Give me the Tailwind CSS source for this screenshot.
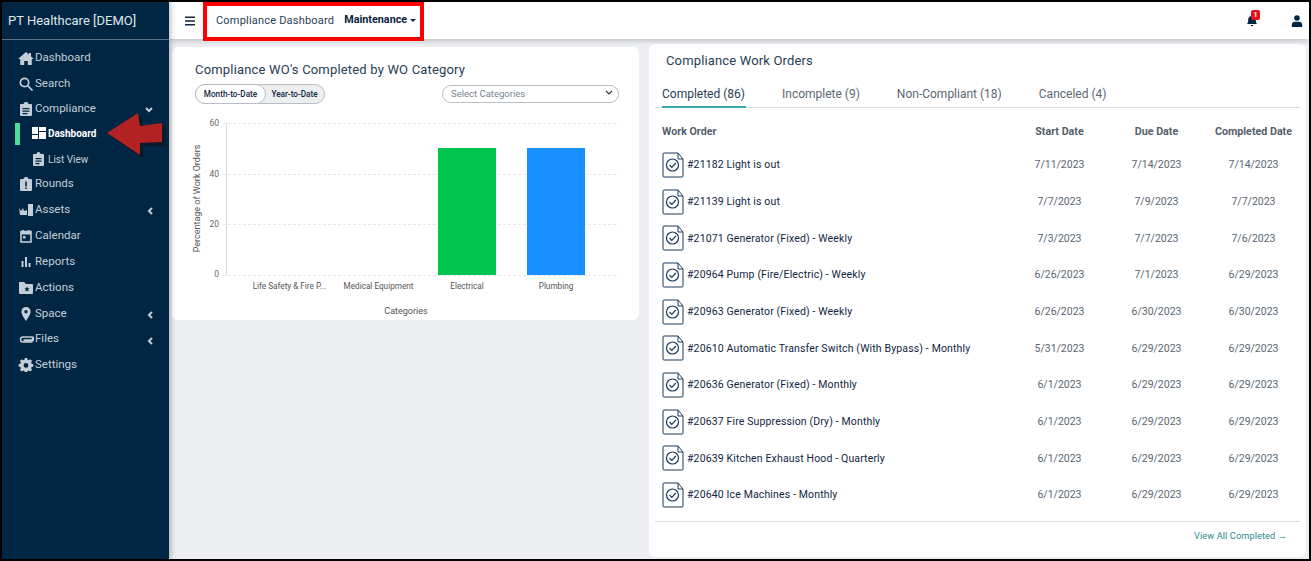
<!DOCTYPE html>
<html>
<head>
<meta charset="utf-8">
<script src="https://cdn.jsdelivr.net/npm/@tailwindcss/browser@4"></script>
</head>
<body class="m-0">
<div class="relative w-[1311px] h-[561px] overflow-hidden border-2 border-black bg-[#eceef2] flex font-['Roboto',sans-serif] text-[#12263f]">
  <!-- Sidebar -->
  <aside class="w-[167px] shrink-0 bg-[#012643] text-[#c4ced8] text-[11.500px] flex flex-col z-10 shadow-[2px_0_5px_rgba(0,0,0,0.25)]">
    <div class="h-[38px] shrink-0 border-b border-[#5b7285] pl-[6px] flex items-center text-[13px] text-[#dfe6ec]">PT Healthcare [DEMO]</div>
    <nav class="pt-[5px] flex flex-col">
      <a class="h-[25.8px] flex items-center pl-[16px] gap-[1px]"><svg class="w-[16px] h-[14px]" viewBox="0 0 16 14" fill="#c4ced8"><path d="M8 1 0 8h2.2v6h4v-4h3.6v4h4V8H16l-3-2.6V2h-2v1.6z"/></svg>Dashboard</a>
      <a class="h-[25.8px] flex items-center pl-[16px] gap-[1px]"><svg class="w-[16px] h-[14px]" viewBox="0 0 16 14" fill="none" stroke="#c4ced8" stroke-width="1.7"><circle cx="6.5" cy="5.5" r="4.2"/><path d="m9.5 8.500 5 5"/></svg>Search</a>
      <a class="h-[24px] flex items-center pl-[16px] gap-[1px] relative"><svg class="w-[16px] h-[14px]" viewBox="0 0 16 14" fill="#c4ced8"><path d="M3 2h2.500a2.500 2 0 0 1 5 0H13a1 1 0 0 1 1 1v10a1 1 0 0 1-1 1H3a1 1 0 0 1-1-1V3a1 1 0 0 1 1-1z"/><path d="M4.500 6h7v1.300h-7zM4.500 8.500h7v1.300h-7zM4.500 11h5v1.300h-5z" fill="#012643"/></svg>Compliance<svg class="absolute left-[143px] top-[10px] w-[8px] h-[6px]" viewBox="0 0 8 6" fill="none" stroke="#c4ced8" stroke-width="2"><path d="m1 1 3 3 3-3"/></svg></a>
      <a class="h-[25px] flex items-center pl-[30px] gap-[2px] relative text-[10px] font-bold text-white"><span class="absolute left-[13px] top-[2px] w-[5px] h-[22px] bg-[#4ade9a]"></span><svg class="w-[14px] h-[12px]" viewBox="0 0 14 12" fill="#fff"><path d="M0 0h6v7H0zM7 0h7v4H7zM7 5h7v7H7zM0 8h6v4H0z"/></svg>Dashboard</a>
      <a class="h-[26px] pt-[1px] flex items-center pl-[30px] gap-[3px] text-[10px]"><svg class="w-[13px] h-[14px]" viewBox="0 0 13 14" fill="#c4ced8"><path d="M2 2h2.500a2 2 0 0 1 4 0H11a1 1 0 0 1 1 1v10a1 1 0 0 1-1 1H2a1 1 0 0 1-1-1V3a1 1 0 0 1 1-1z"/><path d="M3.500 6h6v1.200h-6zM3.500 8.500h6v1.200h-6zM3.500 11h4v1.200h-4z" fill="#012643"/></svg>List View</a>
      <a class="h-[25px] flex items-center pl-[16px] gap-[1px]"><svg class="w-[16px] h-[14px]" viewBox="0 0 16 14" fill="#c4ced8"><path d="M3 2h2.500a2.500 2 0 0 1 5 0H13a1 1 0 0 1 1 1v10a1 1 0 0 1-1 1H3a1 1 0 0 1-1-1V3a1 1 0 0 1 1-1z"/><path d="M7.200 4.500h1.600v5H7.200zM7.200 10.500h1.600v1.600H7.200z" fill="#012643"/></svg>Rounds</a>
      <a class="h-[26px] flex items-center pl-[16px] gap-[1px] relative"><svg class="w-[16px] h-[14px]" viewBox="0 0 16 14" fill="#c4ced8"><path d="M10 1h5v12h-5zM1 5l2 3 2-3 1 3 3-1v5H2z"/></svg>Assets<svg class="absolute left-[145px] top-[10px] w-[6px] h-[8px]" viewBox="0 0 6 8" fill="none" stroke="#c4ced8" stroke-width="2"><path d="M5 1 2 4l3 3"/></svg></a>
      <a class="h-[26px] flex items-center pl-[16px] gap-[1px]"><svg class="w-[16px] h-[14px]" viewBox="0 0 16 14" fill="none" stroke="#c4ced8" stroke-width="1.600"><rect x="3" y="2.500" width="10" height="10.500"/><path d="M3 4h10" stroke-width="3"/><path d="M5 1v2M11 1v2"/><rect x="5" y="7" width="2.500" height="2.500" fill="#c4ced8" stroke="none"/></svg>Calendar</a>
      <a class="h-[26px] flex items-center pl-[16px] gap-[1px]"><svg class="w-[16px] h-[14px]" viewBox="0 0 16 14" fill="#c4ced8"><path d="M3.500 6H5.500V12H3.500zM7 2H9V12H7zM10.500 8H12.500V12H10.500z"/></svg>Reports</a>
      <a class="h-[26px] flex items-center pl-[16px] gap-[1px]"><svg class="w-[16px] h-[14px]" viewBox="0 0 16 14" fill="#c4ced8"><path d="M1 1h5l2 2h6a1 1 0 0 1 1 1v8a1 1 0 0 1-1 1H2a1 1 0 0 1-1-1z"/><path d="m9 5.500.8 1.700 1.800.2-1.300 1.200.4 1.800L9 9.500l-1.700.9.400-1.800-1.300-1.200 1.800-.2z" fill="#012643"/></svg>Actions</a>
      <a class="h-[26px] flex items-center pl-[16px] gap-[1px] relative"><svg class="w-[16px] h-[14px]" viewBox="0 0 16 14" fill="#c4ced8"><path fill-rule="evenodd" d="M8 0a4.600 4.600 0 0 1 4.600 4.600C12.600 8 8 14 8 14S3.400 8 3.400 4.600A4.600 4.600 0 0 1 8 0zm0 3a1.700 1.700 0 1 0 0 3.400A1.700 1.700 0 0 0 8 3z"/></svg>Space<svg class="absolute left-[145px] top-[10px] w-[6px] h-[8px]" viewBox="0 0 6 8" fill="none" stroke="#c4ced8" stroke-width="2"><path d="M5 1 2 4l3 3"/></svg></a>
      <a class="h-[25px] flex items-center pl-[16px] gap-[1px] relative"><svg class="w-[16px] h-[14px]" viewBox="0 0 16 14" fill="none" stroke="#c4ced8" stroke-width="1.500"><path d="M14 5H5a2.200 2.200 0 0 0 0 5h9.500"/><path d="M14 5a2 2 0 0 1 0 3.500H5.500" stroke-width="2.500"/></svg>Files<svg class="absolute left-[145px] top-[10px] w-[6px] h-[8px]" viewBox="0 0 6 8" fill="none" stroke="#c4ced8" stroke-width="2"><path d="M5 1 2 4l3 3"/></svg></a>
      <a class="h-[26px] flex items-center pl-[16px] gap-[1px]"><svg class="w-[16px] h-[14px]" viewBox="0 0 16 14" fill="#c4ced8"><path fill-rule="evenodd" d="M6.800 0h2.400l.4 1.800 1.200.5 1.600-1 1.700 1.700-1 1.600.5 1.200 1.800.4v2.400l-1.800.4-.5 1.200 1 1.600-1.700 1.700-1.600-1-1.200.5-.4 1.800H6.800l-.4-1.800-1.200-.5-1.600 1-1.700-1.700 1-1.600-.5-1.200L.6 8.600V6.200l1.800-.4.5-1.200-1-1.600 1.700-1.700 1.600 1 1.200-.5zM8 5a2.400 2.400 0 1 0 0 4.800A2.400 2.400 0 0 0 8 5z"/></svg>Settings</a>
    </nav>
  </aside>

  <!-- Main -->
  <div class="flex-1 flex flex-col min-w-0">
    <header class="h-[37px] shrink-0 bg-white shadow-[0_2px_5px_rgba(0,0,0,0.18)] flex items-center relative z-[5]">
      <svg class="ml-[15px] w-[12px] h-[10px]" viewBox="0 0 12 10" fill="#12263f"><path d="M1 .5h10V2H1zM1 4.300h10v1.400H1zM1 8h10v1.500H1z"/></svg>
      <div class="ml-[7px] h-[39px] self-start border-[4px] border-[#f00] flex items-center pl-[9px] w-[221px] whitespace-nowrap text-[11px]">
        <span class="tracking-[0.2px] text-[#283e55]">Compliance Dashboard</span>
        <span class="ml-[10px] font-bold text-[#0c2340] text-[10.800px] -mt-[2px]">Maintenance</span>
        <span class="ml-[3px] border-x-[3px] border-x-transparent border-t-[3px] border-t-[#12263f] -mt-[2px]"></span>
      </div>
      <div class="ml-auto relative mr-[34px] w-[10px] h-[12px]">
        <svg class="absolute left-0 top-0 w-[10px] h-[12px]" viewBox="0 0 10 12" fill="#012643"><path d="M5 0a1 1 0 0 1 1 1c2 .5 2.800 2 2.800 4 0 2 .5 3 1.200 4H0c.7-1 1.200-2 1.200-4 0-2 .8-3.500 2.800-4a1 1 0 0 1 1-1zM3.800 10h2.400a1.200 1.200 0 0 1-2.400 0z"/></svg>
        <span class="absolute left-[4px] -top-[5px] w-[9px] h-[10px] rounded-[2px] bg-[#e8101c] text-white text-[7px] font-bold leading-[10px] text-center">1</span>
      </div>
      <svg class="mr-[6px] w-[12px] h-[12px]" viewBox="0 0 12 12" fill="#012643"><circle cx="6" cy="3" r="2.800"/><path d="M.8 12V10a3.500 3.500 0 0 1 3.500-3.300h3.400A3.500 3.500 0 0 1 11.200 10v2z"/></svg>
    </header>

    <div class="flex-1 flex items-start pl-[3px] gap-[10px] min-h-0">
      <!-- Left card -->
      <section class="mt-[8px] w-[467px] h-[273px] bg-white rounded-[6px] shrink-0 px-[23px] pt-[15px]">
        <h2 class="text-[13px] font-normal leading-[16px] tracking-[0.18px] text-[#283e55]">Compliance WO's Completed by WO Category</h2>
        <div class="mt-[6px] flex items-center justify-between">
          <div class="flex h-[20px] w-[130px] rounded-full border border-[#b9bec5] bg-[#eceef0] text-[8.200px] font-medium text-[#12263f] whitespace-nowrap">
            <span class="w-[71px] -m-[1px] rounded-full border border-[#b9bec5] bg-white flex items-center justify-center">Month-to-Date</span>
            <span class="flex-1 flex items-center justify-center">Year-to-Date</span>
          </div>
          <div class="relative h-[18px] w-[177px] rounded-full border border-[#b9bec5] bg-white text-[9.500px] text-[#7a8490] pl-[8px] flex items-center mr-[-3px]">Select Categories
            <svg class="absolute right-[5px] top-[4px] w-[8px] h-[6px]" viewBox="0 0 8 6" fill="none" stroke="#333" stroke-width="1.100"><path d="m1 1 3 3 3-3"/></svg>
          </div>
        </div>
        <svg class="block -ml-[23px] mt-[14px]" width="467" height="200" viewBox="172 118 467 200" font-family="Roboto, sans-serif">
          <g stroke="#e6e8ea" stroke-dasharray="3 2"><path d="M223 123.500h396M223 174.500h396M223 224.500h396M223 275.500h396"/></g>
          <path d="M226.500 123v152" stroke="#dcdfe2"/>
          <rect x="438" y="148" width="58" height="127" fill="#00c64f"/>
          <rect x="527" y="148" width="58" height="127" fill="#1890ff"/>
          <g fill="#666" font-size="8.500" text-anchor="end"><text x="219" y="126">60</text><text x="219" y="177">40</text><text x="219" y="227">20</text><text x="219" y="277">0</text></g>
          <g fill="#555" font-size="8.200" text-anchor="middle"><text x="289.500" y="289">Life Safety &amp; Fire P...</text><text x="378.500" y="289">Medical Equipment</text><text x="467" y="289">Electrical</text><text x="556" y="289">Plumbing</text></g>
          <text x="406" y="314" fill="#555" font-size="9" text-anchor="middle">Categories</text>
          <text transform="translate(200 198.500) rotate(-90)" fill="#555" font-size="9" text-anchor="middle">Percentage of Work Orders</text>
        </svg>
      </section>

      <!-- Right card -->
      <section class="mt-[5px] w-[657px] h-[513px] bg-white rounded-[6px] shrink-0 px-[6px] flex flex-col">
        <h2 class="mt-[9px] ml-[11px] text-[13px] font-normal leading-[16px] tracking-[0.15px] text-[#283e55]">Compliance Work Orders</h2>
        <div class="mt-[12px] h-[27px] flex border-b border-[#d9dde1] text-[12px] text-[#5b6671] pl-[7px] whitespace-nowrap">
          <span class="h-[27px] w-[84px] border-b-[2px] border-[#3aa9ad] text-[#283e55] pt-[4px]">Completed (86)</span>
          <span class="ml-[36px] pt-[4px]">Incomplete (9)</span>
          <span class="ml-[37px] pt-[4px]">Non-Compliant (18)</span>
          <span class="ml-[37px] pt-[4px]">Canceled (4)</span>
        </div>
        <div class="mt-[15px] ml-[7px] grid grid-cols-[349px_97px_97px_97px] text-[10.700px] font-bold text-[#55606b] h-[18px] items-center">
          <span>Work Order</span><span class="text-center">Start Date</span><span class="text-center">Due Date</span><span class="text-center">Completed Date</span>
        </div>
        <div class="ml-[7px] mt-[5.800px] flex flex-col text-[10.500px]">
          <div class="grid grid-cols-[349px_97px_97px_97px] h-[36.660px] items-center"><span class="flex items-center gap-[3px] text-[#12263f] tracking-[0.14px]"><svg class="w-[22px] h-[26px] shrink-0" viewBox="0 0 22 26" fill="none" stroke="#1d3a57" stroke-width="1"><path d="M1 2a1 1 0 0 1 1-1h14l5 6v17a1 1 0 0 1-1 1H2a1 1 0 0 1-1-1zM16 1v6h5"/><circle cx="10.500" cy="13" r="6" stroke-width="1.200"/><path d="m7.500 13 2.300 2.300 4-4.300" stroke-width="1.200"/></svg>#21182 Light is out</span><span class="text-center text-[#5b6671]">7/11/2023</span><span class="text-center text-[#5b6671]">7/14/2023</span><span class="text-center text-[#5b6671]">7/14/2023</span></div>
          <div class="grid grid-cols-[349px_97px_97px_97px] h-[36.660px] items-center"><span class="flex items-center gap-[3px] text-[#12263f] tracking-[0.14px]"><svg class="w-[22px] h-[26px] shrink-0" viewBox="0 0 22 26" fill="none" stroke="#1d3a57" stroke-width="1"><path d="M1 2a1 1 0 0 1 1-1h14l5 6v17a1 1 0 0 1-1 1H2a1 1 0 0 1-1-1zM16 1v6h5"/><circle cx="10.500" cy="13" r="6" stroke-width="1.200"/><path d="m7.500 13 2.300 2.300 4-4.300" stroke-width="1.200"/></svg>#21139 Light is out</span><span class="text-center text-[#5b6671]">7/7/2023</span><span class="text-center text-[#5b6671]">7/9/2023</span><span class="text-center text-[#5b6671]">7/7/2023</span></div>
          <div class="grid grid-cols-[349px_97px_97px_97px] h-[36.660px] items-center"><span class="flex items-center gap-[3px] text-[#12263f] tracking-[0.14px]"><svg class="w-[22px] h-[26px] shrink-0" viewBox="0 0 22 26" fill="none" stroke="#1d3a57" stroke-width="1"><path d="M1 2a1 1 0 0 1 1-1h14l5 6v17a1 1 0 0 1-1 1H2a1 1 0 0 1-1-1zM16 1v6h5"/><circle cx="10.500" cy="13" r="6" stroke-width="1.200"/><path d="m7.500 13 2.300 2.300 4-4.300" stroke-width="1.200"/></svg>#21071 Generator (Fixed) - Weekly</span><span class="text-center text-[#5b6671]">7/3/2023</span><span class="text-center text-[#5b6671]">7/7/2023</span><span class="text-center text-[#5b6671]">7/6/2023</span></div>
          <div class="grid grid-cols-[349px_97px_97px_97px] h-[36.660px] items-center"><span class="flex items-center gap-[3px] text-[#12263f] tracking-[0.14px]"><svg class="w-[22px] h-[26px] shrink-0" viewBox="0 0 22 26" fill="none" stroke="#1d3a57" stroke-width="1"><path d="M1 2a1 1 0 0 1 1-1h14l5 6v17a1 1 0 0 1-1 1H2a1 1 0 0 1-1-1zM16 1v6h5"/><circle cx="10.500" cy="13" r="6" stroke-width="1.200"/><path d="m7.500 13 2.300 2.300 4-4.300" stroke-width="1.200"/></svg>#20964 Pump (Fire/Electric) - Weekly</span><span class="text-center text-[#5b6671]">6/26/2023</span><span class="text-center text-[#5b6671]">7/1/2023</span><span class="text-center text-[#5b6671]">6/29/2023</span></div>
          <div class="grid grid-cols-[349px_97px_97px_97px] h-[36.660px] items-center"><span class="flex items-center gap-[3px] text-[#12263f] tracking-[0.14px]"><svg class="w-[22px] h-[26px] shrink-0" viewBox="0 0 22 26" fill="none" stroke="#1d3a57" stroke-width="1"><path d="M1 2a1 1 0 0 1 1-1h14l5 6v17a1 1 0 0 1-1 1H2a1 1 0 0 1-1-1zM16 1v6h5"/><circle cx="10.500" cy="13" r="6" stroke-width="1.200"/><path d="m7.500 13 2.300 2.300 4-4.300" stroke-width="1.200"/></svg>#20963 Generator (Fixed) - Weekly</span><span class="text-center text-[#5b6671]">6/26/2023</span><span class="text-center text-[#5b6671]">6/30/2023</span><span class="text-center text-[#5b6671]">6/30/2023</span></div>
          <div class="grid grid-cols-[349px_97px_97px_97px] h-[36.660px] items-center"><span class="flex items-center gap-[3px] text-[#12263f] tracking-[0.14px]"><svg class="w-[22px] h-[26px] shrink-0" viewBox="0 0 22 26" fill="none" stroke="#1d3a57" stroke-width="1"><path d="M1 2a1 1 0 0 1 1-1h14l5 6v17a1 1 0 0 1-1 1H2a1 1 0 0 1-1-1zM16 1v6h5"/><circle cx="10.500" cy="13" r="6" stroke-width="1.200"/><path d="m7.500 13 2.300 2.300 4-4.300" stroke-width="1.200"/></svg>#20610 Automatic Transfer Switch (With Bypass) - Monthly</span><span class="text-center text-[#5b6671]">5/31/2023</span><span class="text-center text-[#5b6671]">6/29/2023</span><span class="text-center text-[#5b6671]">6/29/2023</span></div>
          <div class="grid grid-cols-[349px_97px_97px_97px] h-[36.660px] items-center"><span class="flex items-center gap-[3px] text-[#12263f] tracking-[0.14px]"><svg class="w-[22px] h-[26px] shrink-0" viewBox="0 0 22 26" fill="none" stroke="#1d3a57" stroke-width="1"><path d="M1 2a1 1 0 0 1 1-1h14l5 6v17a1 1 0 0 1-1 1H2a1 1 0 0 1-1-1zM16 1v6h5"/><circle cx="10.500" cy="13" r="6" stroke-width="1.200"/><path d="m7.500 13 2.300 2.300 4-4.300" stroke-width="1.200"/></svg>#20636 Generator (Fixed) - Monthly</span><span class="text-center text-[#5b6671]">6/1/2023</span><span class="text-center text-[#5b6671]">6/29/2023</span><span class="text-center text-[#5b6671]">6/29/2023</span></div>
          <div class="grid grid-cols-[349px_97px_97px_97px] h-[36.660px] items-center"><span class="flex items-center gap-[3px] text-[#12263f] tracking-[0.14px]"><svg class="w-[22px] h-[26px] shrink-0" viewBox="0 0 22 26" fill="none" stroke="#1d3a57" stroke-width="1"><path d="M1 2a1 1 0 0 1 1-1h14l5 6v17a1 1 0 0 1-1 1H2a1 1 0 0 1-1-1zM16 1v6h5"/><circle cx="10.500" cy="13" r="6" stroke-width="1.200"/><path d="m7.500 13 2.300 2.300 4-4.300" stroke-width="1.200"/></svg>#20637 Fire Suppression (Dry) - Monthly</span><span class="text-center text-[#5b6671]">6/1/2023</span><span class="text-center text-[#5b6671]">6/29/2023</span><span class="text-center text-[#5b6671]">6/29/2023</span></div>
          <div class="grid grid-cols-[349px_97px_97px_97px] h-[36.660px] items-center"><span class="flex items-center gap-[3px] text-[#12263f] tracking-[0.14px]"><svg class="w-[22px] h-[26px] shrink-0" viewBox="0 0 22 26" fill="none" stroke="#1d3a57" stroke-width="1"><path d="M1 2a1 1 0 0 1 1-1h14l5 6v17a1 1 0 0 1-1 1H2a1 1 0 0 1-1-1zM16 1v6h5"/><circle cx="10.500" cy="13" r="6" stroke-width="1.200"/><path d="m7.500 13 2.300 2.300 4-4.300" stroke-width="1.200"/></svg>#20639 Kitchen Exhaust Hood - Quarterly</span><span class="text-center text-[#5b6671]">6/1/2023</span><span class="text-center text-[#5b6671]">6/29/2023</span><span class="text-center text-[#5b6671]">6/29/2023</span></div>
          <div class="grid grid-cols-[349px_97px_97px_97px] h-[36.660px] items-center"><span class="flex items-center gap-[3px] text-[#12263f] tracking-[0.14px]"><svg class="w-[22px] h-[26px] shrink-0" viewBox="0 0 22 26" fill="none" stroke="#1d3a57" stroke-width="1"><path d="M1 2a1 1 0 0 1 1-1h14l5 6v17a1 1 0 0 1-1 1H2a1 1 0 0 1-1-1zM16 1v6h5"/><circle cx="10.500" cy="13" r="6" stroke-width="1.200"/><path d="m7.500 13 2.300 2.300 4-4.300" stroke-width="1.200"/></svg>#20640 Ice Machines - Monthly</span><span class="text-center text-[#5b6671]">6/1/2023</span><span class="text-center text-[#5b6671]">6/29/2023</span><span class="text-center text-[#5b6671]">6/29/2023</span></div>
        </div>
        <div class="mt-[8px] border-t border-[#d9dde1] pt-[8px] pr-[13px] text-right text-[9.200px] tracking-[0.1px] text-[#2b8a8e] leading-[12px]">View All Completed →</div>
      </section>
    </div>
  </div>

  <!-- Red annotation arrow over the sidebar -->
  <svg class="absolute left-[98px] top-[105px] z-20" width="72" height="56" viewBox="100 107 72 56">
    <path d="M110 136 141 116 143 129 166 126 166 146 143 146 143 158z" fill="#0a1a2a"/>
    <path d="M107 133 138 113 140 126 162 123 162 142 140 143 140 155z" fill="#b22222"/>
  </svg>
</div>
</body>
</html>
